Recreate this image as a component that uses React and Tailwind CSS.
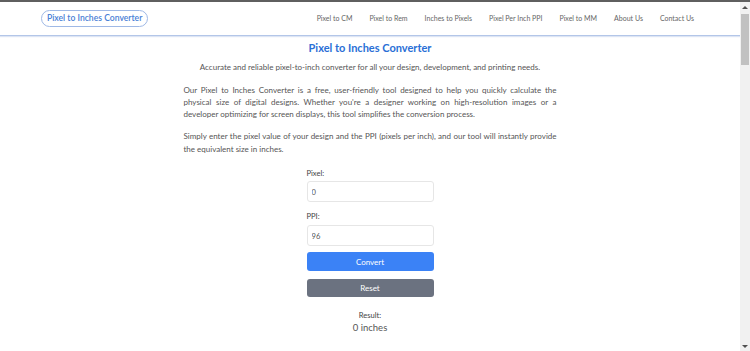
import React, { useState } from "react";

const navLinks = [
  "Pixel to CM",
  "Pixel to Rem",
  "Inches to Pixels",
  "Pixel Per Inch PPI",
  "Pixel to MM",
  "About Us",
  "Contact Us",
];

const Scrollbar = () => (
  <div className="w-[10px] flex flex-col bg-[#f1f1f1]">
    <div className="h-[10px] flex items-center justify-center">
      <div className="w-0 h-0 border-l-[3px] border-r-[3px] border-b-[3px] border-l-transparent border-r-transparent border-b-[#505050]" />
    </div>
    <div className="h-[51px] mx-[1px] mt-[2px] bg-[#c1c1c1]" />
    <div className="flex-1" />
    <div className="h-[10px] flex items-center justify-center">
      <div className="w-0 h-0 border-l-[3px] border-r-[3px] border-t-[3px] border-l-transparent border-r-transparent border-t-[#505050]" />
    </div>
  </div>
);

export default function App() {
  const [pixel, setPixel] = useState("0");
  const [ppi, setPpi] = useState("96");
  const [result, setResult] = useState("0");

  const convert = () => {
    const p = parseFloat(pixel) || 0;
    const d = parseFloat(ppi) || 96;
    setResult(String(+(p / d).toFixed(4)));
  };

  const reset = () => {
    setPixel("0");
    setPpi("96");
    setResult("0");
  };

  return (
    <div className="h-[351px] overflow-hidden flex flex-col bg-white font-['Lato',sans-serif] text-[#555]">
      {/* window edge */}
      <div className="h-[2px] bg-[#5f5f5f]" />
      <div className="flex-1 flex min-h-0">
        <div className="flex-1 flex flex-col min-w-0">
          {/* Header */}
          <header className="h-[34px] flex items-center justify-between pl-[41px] pr-[46px] border-b border-[#b3c6e8] shadow-[0_1px_1px_rgba(120,150,210,0.25)]">
            <a className="px-[5px] py-[2px] rounded-full border border-[#9fb9e6] text-[8.6px] font-semibold text-[#4a80d6] leading-[11px]">
              Pixel to Inches Converter
            </a>
            <nav className="flex items-center gap-[17px] text-[7px] text-[#666]">
              {navLinks.map((l) => (
                <a key={l}>{l}</a>
              ))}
            </nav>
          </header>

          {/* Main */}
          <main className="w-[373px] mx-auto flex flex-col items-center pt-[5px]">
            <h1 className="text-[11px] font-bold text-[#2a6fd6] leading-[14px]">
              Pixel to Inches Converter
            </h1>
            <p className="mt-[6px] text-[8px] leading-[12px] text-center">
              Accurate and reliable pixel-to-inch converter for all your design, development, and printing needs.
            </p>
            <p className="mt-[11px] text-[8px] leading-[12px] text-justify">
              Our Pixel to Inches Converter is a free, user-friendly tool designed to help you quickly calculate the physical size of digital designs. Whether you're a designer working on high-resolution images or a developer optimizing for screen displays, this tool simplifies the conversion process.
            </p>
            <p className="mt-[10px] text-[8px] leading-[12.5px] text-justify">
              Simply enter the pixel value of your design and the PPI (pixels per inch), and our tool will instantly provide the equivalent size in inches.
            </p>

            {/* Form */}
            <div className="w-[127px] mt-[13px] flex flex-col">
              <label className="text-[7.6px] leading-[10px] text-[#444]">Pixel:</label>
              <input
                value={pixel}
                onChange={(e) => setPixel(e.target.value)}
                className="mt-[3px] h-[21px] px-[4px] text-[7.6px] text-[#555] border border-[#e6e6e6] rounded-[3px] outline-none"
              />
              <label className="mt-[9px] text-[7.6px] leading-[10px] text-[#444]">PPI:</label>
              <input
                value={ppi}
                onChange={(e) => setPpi(e.target.value)}
                className="mt-[4px] h-[21px] px-[4px] text-[7.6px] text-[#555] border border-[#e6e6e6] rounded-[3px] outline-none"
              />
              <button
                onClick={convert}
                className="mt-[6px] h-[19px] rounded-[3px] bg-[#3b82f6] text-white text-[8px]"
              >
                Convert
              </button>
              <button
                onClick={reset}
                className="mt-[8px] h-[18px] rounded-[3px] bg-[#6b7280] text-white text-[8px]"
              >
                Reset
              </button>
            </div>

            {/* Result */}
            <div className="mt-[13px] flex flex-col items-center">
              <span className="text-[7.6px] leading-[10px] text-[#444]">Result:</span>
              <span className="mt-[2px] text-[9.5px] leading-[12px]">{result} inches</span>
            </div>
          </main>
        </div>
        <Scrollbar />
      </div>
    </div>
  );
}
